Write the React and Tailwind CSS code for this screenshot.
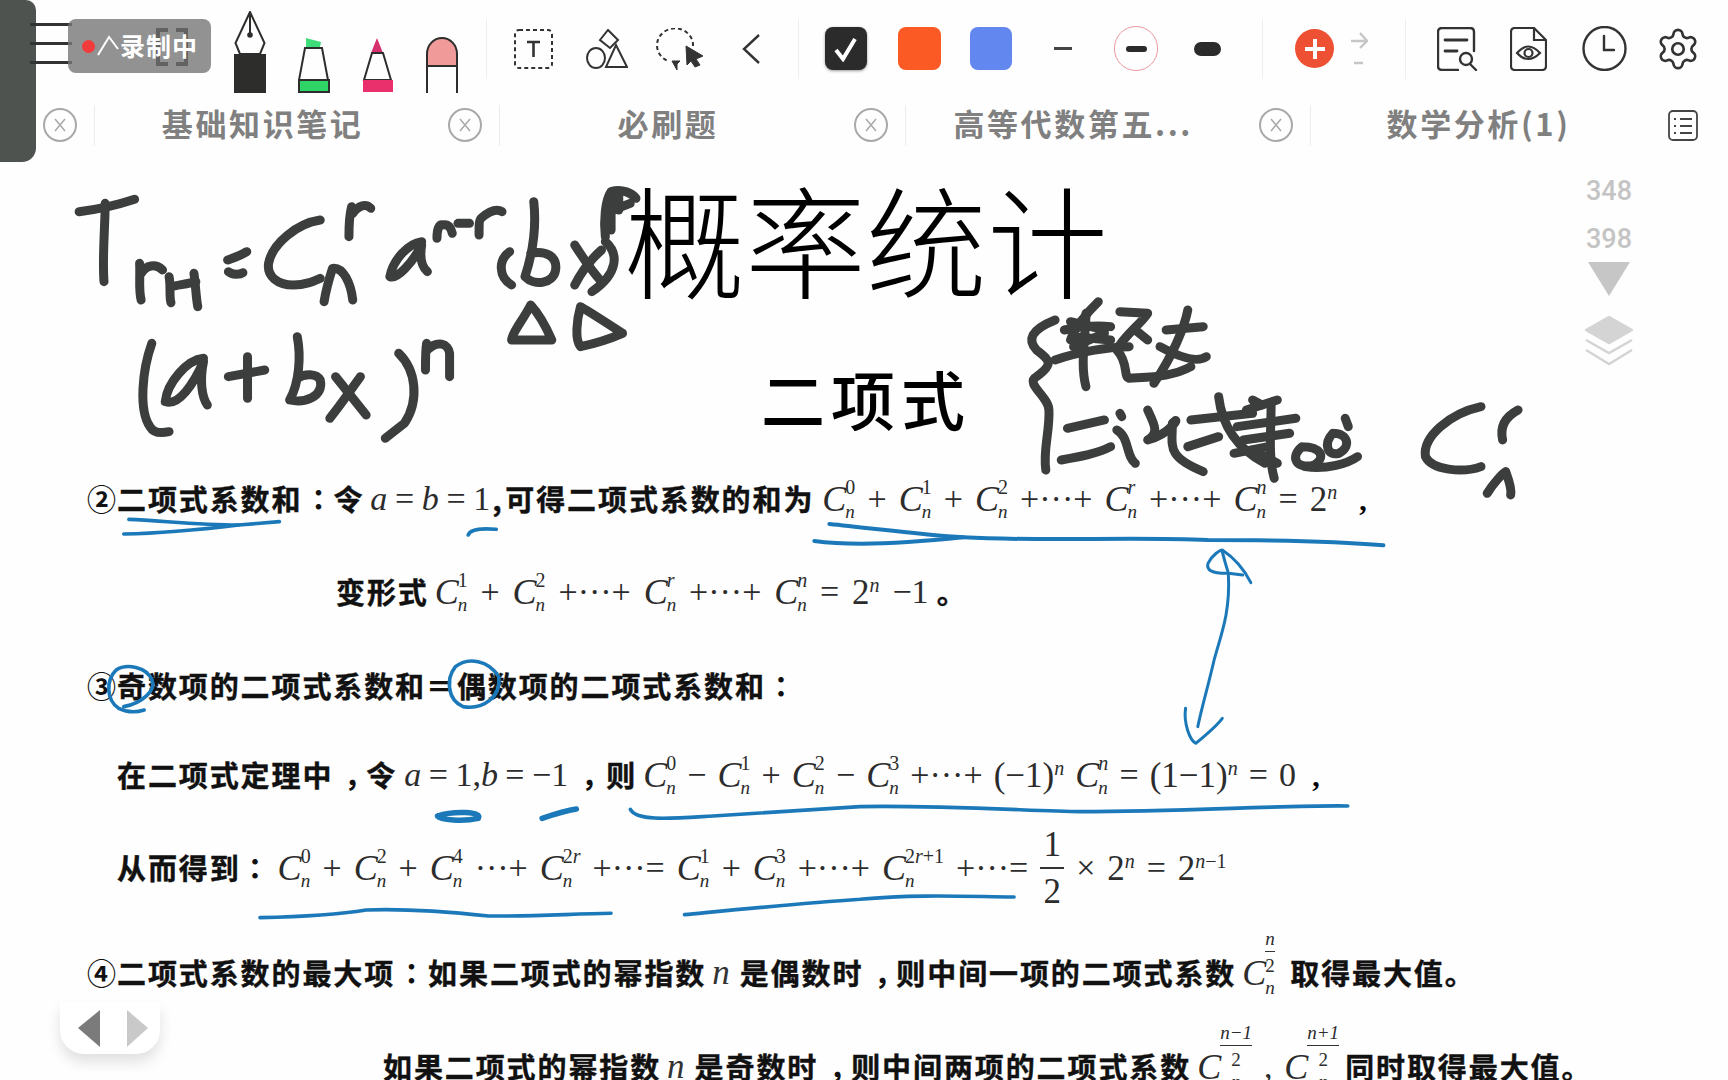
import React from 'react';
import { Settings } from 'lucide-react';

const cjk = "font-['Noto_Sans_CJK_SC','Noto_Sans',sans-serif]";
const cjkTc = "font-['Noto_Sans_CJK_TC','Noto_Sans',sans-serif]";
const serif = "font-['Liberation_Serif','Noto_Sans_CJK_SC',serif]";

// freehand pen marks, coords taken from crops so x/y scale differ
const Strokes = ({ tx, ty, sx, list, width, color }) => (
  <g transform={`translate(${tx} ${ty}) scale(${sx} 0.3333)`} fill="none" stroke={color} strokeWidth={width} strokeLinecap="round" strokeLinejoin="round">
    {list.map((d, i) => (
      <path key={i} d={d} vectorEffect="non-scaling-stroke" />
    ))}
  </g>
);

const formulaInk = [
  'M50 125C90 120 150 105 195 88', 'M118 100C118 170 110 260 115 335',
  'M208 280C210 320 205 360 212 390', 'M212 310C225 285 250 280 268 300',
  'M285 320C290 350 285 380 290 398', 'M290 350C310 345 340 340 355 335', 'M350 310C355 350 355 380 360 410',
  'M438 270C450 265 470 258 488 245', 'M440 305C450 315 470 315 478 308',
  'M680 150C620 160 555 220 545 280C540 320 570 345 610 345C640 345 660 335 680 325',
  'M762 110C755 140 755 170 755 200', 'M765 130C780 105 800 100 812 115',
  'M690 395C695 360 705 320 712 295C740 290 760 340 765 390',
  'M945 215C910 220 870 270 862 320C880 330 920 280 945 225C940 260 945 290 960 305',
  'M985 205C985 180 990 160 1000 165C1015 160 1022 175 1025 190', 'M1040 160L1070 160',
  'M1095 195C1095 170 1095 150 1100 145C1120 125 1140 115 1155 125',
  'M1175 245C1145 270 1145 320 1180 345',
  'M1238 95C1245 170 1235 250 1215 320C1240 350 1290 340 1295 300C1300 260 1270 240 1230 250',
  'M1345 225C1370 270 1395 310 1415 335', 'M1345 345C1365 300 1385 270 1415 240',
  'M1425 215C1460 250 1460 310 1390 365',
  'M1425 200C1420 150 1425 90 1440 65C1470 55 1495 70 1505 85', 'M1445 120L1490 100', 'M1440 80L1440 180', 'M1460 70L1460 120',
  'M1230 405C1210 450 1180 490 1180 510C1210 510 1250 510 1285 510C1270 470 1250 430 1230 405Z',
  'M1360 410C1350 450 1345 510 1360 530C1400 520 1450 500 1470 490C1430 460 1390 430 1360 410Z',
  'M240 520C215 600 205 720 235 770C245 790 265 790 285 785',
  'M375 565C330 570 280 640 275 695C310 710 350 640 375 575C365 630 370 680 385 705',
  'M440 620L535 600', 'M490 560L490 685',
  'M620 500C630 560 625 640 600 690C640 700 690 680 680 630C670 610 640 610 620 625',
  'M720 620L800 735', 'M785 620C760 660 730 710 705 745',
  'M885 550C930 600 940 690 900 760L850 805',
  'M955 600C955 570 955 540 958 520', 'M960 540C985 510 1015 520 1018 550L1018 620',
];

const noteInk = [
  'M640 450C600 480 595 510 610 540C630 570 640 580 610 620C590 640 630 680 630 720C632 780 620 840 625 900',
  'M710 395C690 430 670 480 665 510', 'M655 480C680 470 710 465 730 470', 'M690 430C690 500 680 580 690 650',
  'M640 570C680 545 730 530 760 530', 'M670 500L730 510', 'M670 530L720 490', 'M665 455L720 480',
  'M745 425L790 430C780 460 750 500 740 540C760 580 750 620 760 625C800 620 830 620 860 590',
  'M820 480L880 470', 'M855 420C850 470 830 560 800 640', 'M810 530C840 560 870 580 885 560', 'M770 480L790 510',
  'M660 775L720 750', 'M650 870C680 860 710 850 730 830',
  'M745 730L748 740', 'M740 780C760 800 755 860 770 880',
  'M790 720C800 760 810 790 790 810C830 790 845 730 830 760C830 830 820 860 880 905',
  'M860 750L960 730', 'M905 680C910 760 930 830 980 880', 'M960 690L975 705', 'M855 830L905 800',
  'M950 720L1000 690', 'M935 770L1030 745', 'M945 810L1020 790', 'M990 700C990 780 985 860 995 925', 'M930 850L985 830', 'M960 840L1000 880',
  'M1040 830C1020 860 1030 900 1060 885C1080 860 1070 830 1040 830',
  'M1090 790C1075 820 1080 860 1100 850C1120 830 1115 790 1090 790', 'M1045 890C1080 900 1115 880 1130 860', 'M1110 745L1115 770',
  'M1330 710C1280 730 1235 800 1240 860C1250 900 1300 910 1330 890',
  'M1365 810C1360 770 1370 740 1390 720',
  'M1340 970C1350 940 1365 910 1370 905C1375 930 1380 960 1378 975',
];

const Ink = () => (
  <svg className="absolute inset-0 pointer-events-none" width="1728" height="1080">
    <Strokes tx={60} ty={170} sx={0.3827} list={formulaInk} width={9} color="#3c3e3d" />
    <Strokes tx={660} ty={170} sx={0.6173} list={noteInk} width={9} color="#3c3e3d" />
    <Strokes tx={60} ty={460} sx={0.5102} width={3.6} color="#1c79b9" list={[
      'M135 178C200 182 270 195 350 195L430 185', 'M125 222C200 220 270 210 350 195',
      'M800 225C805 205 830 205 855 208',
      'M180 660C170 620 130 610 110 630C90 660 90 720 115 745C135 760 155 755 165 750', 'M125 740C160 730 190 690 180 660',
      'M860 650C840 600 800 590 775 620C755 660 760 720 790 740C830 750 865 710 860 650',
    ]} />
    <Strokes tx={800} ty={460} sx={0.408} width={4} color="#1c79b9" list={[
      'M72 192C180 205 300 225 400 232C600 245 800 230 1000 240C1200 240 1330 245 1430 256',
      'M35 243C150 262 300 245 400 232',
    ]} />
    <Strokes tx={800} ty={460} sx={0.408} width={3} color="#1c79b9" list={[
      'M1050 345C1055 460 1030 530 1015 600C1000 680 985 740 975 800',
      'M945 745C940 790 955 840 970 850C990 830 1020 800 1035 775',
      'M1045 340C1010 340 995 330 1000 310C1010 285 1030 270 1035 270C1060 290 1085 320 1105 368', 'M1035 275C1040 300 1045 320 1050 340L1085 345',
    ]} />
    <Strokes tx={60} ty={740} sx={0.5102} width={3.6} color="#1c79b9" list={[
      'M1118 208C1130 245 1200 235 1280 228L1568 200C1700 195 1900 212 2000 215C2200 215 2400 195 2524 198',
      'M392 533C480 530 540 525 600 510C680 505 760 515 840 528C920 530 1000 522 1080 520',
      'M1224 524C1320 510 1450 490 1568 478C1680 462 1780 470 1870 471',
    ]} />
    <Strokes tx={60} ty={740} sx={0.5102} width={5.5} color="#1c79b9" list={[
      'M740 228C770 212 830 214 820 235C790 245 745 240 740 228',
      'M945 235C970 222 990 212 1012 207',
    ]} />
  </svg>
);

const PenIcon = () => (
  <svg width="32" height="82" fill="none" stroke="#2d2d2b" strokeWidth="2">
    <path d="M16 1L1.5 32L6 43H26L30.5 32Z" />
    <path d="M16 1V24" />
    <circle cx="16" cy="24" r="1.8" fill="#2d2d2b" />
    <rect x="0" y="44" width="31" height="37" fill="#2d2d2b" />
  </svg>
);

const GreenMarker = () => (
  <svg width="32" height="55" fill="none" stroke="#2d2d2b" strokeWidth="2">
    <path d="M8 0L23 4L22 9H8Z" fill="#3fdc7a" stroke="none" />
    <path d="M7 10H24L30 42H1Z" />
    <rect x="1" y="42" width="30" height="12" fill="#2fd466" />
  </svg>
);

const PinkMarker = () => (
  <svg width="32" height="55" fill="none" stroke="#2d2d2b" strokeWidth="2">
    <path d="M15 0L9 15H21Z" fill="#d6306f" stroke="none" />
    <path d="M10 15H21L29 42H2Z" />
    <rect x="1" y="42" width="30" height="12" fill="#ea2f6d" stroke="none" />
  </svg>
);

const Eraser = () => (
  <svg width="32" height="56" fill="none" stroke="#2d2d2b" strokeWidth="2">
    <path d="M1 29V17A15 16 0 0 1 31 17V29Z" fill="#f09a9a" />
    <path d="M1 29V56M31 29V56" />
  </svg>
);

const TextTool = () => (
  <svg width="39" height="40" fill="none" stroke="#333">
    <rect x="1" y="1" width="37" height="38" rx="4" strokeWidth="2" strokeDasharray="4 3" />
    <path d="M13 13H26M19.5 13V28" strokeWidth="2.6" />
  </svg>
);

const ShapesTool = () => (
  <svg width="42" height="40" fill="none" stroke="#333" strokeWidth="2">
    <path d="M22 1L32 11L24 19L14 11Z" />
    <ellipse cx="10" cy="29" rx="9" ry="10" />
    <path d="M30 16L41 38H20Z" />
  </svg>
);

const LassoTool = () => (
  <svg width="48" height="42" fill="none" stroke="#333" strokeWidth="2">
    <path d="M37 18A18 17 0 1 0 12 33" strokeDasharray="4 3" />
    <path d="M30 18L47 28L40 31L44 37L39 39L35 33L31 37Z" fill="#333" strokeWidth="1" />
    <path d="M16 33H24L21 36V42Z" fill="#333" strokeWidth="1" />
  </svg>
);

const DocSearch = () => (
  <svg width="41" height="44" fill="none" stroke="#333" strokeWidth="2.4" strokeLinecap="round">
    <path d="M21 43H5Q1 43 1 39V5Q1 1 5 1H33Q37 1 37 5V24" />
    <path d="M8 13H30M8 24H20" strokeWidth="2.8" />
    <circle cx="29" cy="32" r="6" />
    <path d="M33 37L39 43" />
  </svg>
);

const DocEye = () => (
  <svg width="37" height="44" fill="none" stroke="#333" strokeWidth="2.2">
    <path d="M5 1H24L36 13V39Q36 43 32 43H5Q1 43 1 39V5Q1 1 5 1Z" />
    <path d="M24 1V13H36" />
    <path d="M7 26Q18 13 30 26Q18 38 7 26Z" />
    <circle cx="18.5" cy="26" r="4" />
  </svg>
);

const ClockIcon = () => (
  <svg width="45" height="45" fill="none" stroke="#333" strokeWidth="2.4" strokeLinecap="round">
    <ellipse cx="22.5" cy="22.5" rx="21" ry="21.5" />
    <path d="M22 10V24H32" />
  </svg>
);

const CloseDot = () => (
  <svg width="34" height="34" fill="none" stroke="#a9a9a9" className="shrink-0">
    <circle cx="17" cy="17" r="16" strokeWidth="2" />
    <path d="M12 11L22 23M22 11L12 23" strokeWidth="1.5" />
  </svg>
);

const ListIcon = () => (
  <svg width="30" height="31" fill="none" stroke="#444" strokeWidth="1.8">
    <rect x="1" y="1" width="28" height="29" rx="4" />
    <path d="M6 9H8M12 9H24M6 16H8M12 16H24M6 23H8M12 23H24" />
  </svg>
);

const Tab = ({ label }) => (
  <div className="w-[405.3px] h-[42px] flex items-center shrink-0">
    <CloseDot />
    <div className="ml-[17px] h-[41px] w-px bg-[#ececec]" />
    <div className={`flex-1 pr-[18px] -mt-[4px] text-center text-[31px] tracking-[2.6px] font-bold text-[#808080] whitespace-nowrap ${cjk}`}>{label}</div>
  </div>
);

const Sep = ({ className }) => <div className={`h-[60px] w-px bg-[#efefef] shrink-0 ${className}`} />;

const Toolbar = () => (
  <div className="flex items-center h-[100px] pb-[3px] pl-[234px]">
    <div className="flex items-end gap-[32px] self-end mb-[4px]">
      <PenIcon />
      <GreenMarker />
      <PinkMarker />
      <Eraser />
    </div>
    <Sep className="ml-[28px]" />
    <div className="ml-[27px]"><TextTool /></div>
    <div className="ml-[33px]"><ShapesTool /></div>
    <div className="ml-[28px]"><LassoTool /></div>
    <svg className="ml-[38px]" width="18" height="30" fill="none" stroke="#333" strokeWidth="2.4"><path d="M17 1L2 15L17 29" /></svg>
    <Sep className="ml-[38px]" />
    <div className="ml-[26px] w-[42px] h-[43px] rounded-lg bg-[#2b2b2b] flex items-center justify-center shadow-[0_1px_3px_#999]">
      <svg width="26" height="26" fill="none" stroke="#fff" strokeWidth="4"><path d="M3 14L10 23L22 3" /></svg>
    </div>
    <div className="ml-[31px] w-[43px] h-[43px] rounded-lg bg-[#fb5a24]" />
    <div className="ml-[29px] w-[42px] h-[43px] rounded-lg bg-[#6287ee]" />
    <div className="ml-[42px] w-[18px] h-[3px] bg-[#444]" />
    <div className="ml-[42px] w-[44px] h-[45px] rounded-full border border-[#e89aa0] flex items-center justify-center">
      <div className="w-[21px] h-[6px] rounded-full bg-[#2b2b2b]" />
    </div>
    <div className="ml-[36px] w-[27px] h-[14px] rounded-full bg-[#2b2b2b]" />
    <Sep className="ml-[41px]" />
    <div className="ml-[32px] w-[39px] h-[39px] rounded-full bg-[#ee5033] flex items-center justify-center">
      <svg width="22" height="22" fill="none" stroke="#fff" strokeWidth="4"><path d="M11 1V21M1 11H21" /></svg>
    </div>
    <svg className="ml-[16px]" width="18" height="34" fill="none" stroke="#c6c6c6" strokeWidth="2.4">
      <path d="M1 9H16M10 1L17 9L10 16M4 31H13" />
    </svg>
    <Sep className="ml-[37px]" />
    <div className="ml-[31px]"><DocSearch /></div>
    <div className="ml-[32px]"><DocEye /></div>
    <div className="ml-[35px]"><ClockIcon /></div>
    <Settings className="ml-[28px] text-[#333]" size={46} strokeWidth={1.4} />
  </div>
);

const Tabs = () => (
  <div className="flex items-center h-[48px] pl-[43px]">
    <Tab label="基础知识笔记" />
    <Tab label="必刷题" />
    <Tab label="高等代数第五..." />
    <Tab label="数学分析(1)" />
    <div className="ml-[4px]"><ListIcon /></div>
  </div>
);

// formula pieces
const I = ({ children }) => <i>{children}</i>;

const C = ({ sup, sub = 'n', className = '' }) => (
  <span className={`inline-flex items-center leading-none ${className}`}>
    <i className="text-[36px]">C</i>
    <span className="flex flex-col items-start justify-between h-[44px] -ml-[1px] text-[20px] leading-none">
      <span>{sup}</span>
      <i className="text-[19px]">{sub}</i>
    </span>
  </span>
);

// C with a fraction as its upper index, taller than the text row
const CFrac = ({ top }) => (
  <span className="inline-flex items-center h-[38px] leading-none">
    <i className="text-[36px]">C</i>
    <span className="flex flex-col items-center justify-between h-[68px] mb-[20px] -ml-[1px] text-[19px] leading-none">
      <i>{top}</i>
      <span className="w-full h-px bg-[#333]" />
      <span>2</span>
      <i>n</i>
    </span>
  </span>
);

const Power = ({ base, sup }) => (
  <span className="inline-flex items-start leading-none">
    <span className="text-[35px]">{base}</span>
    <span className="text-[20px] leading-none">{sup}</span>
  </span>
);

const Sym = ({ children }) => <span className="text-[34px] leading-none">{children}</span>;

const Formula = ({ w, children, className = '' }) => (
  <div className={`flex items-center justify-between shrink-0 text-[#2c2c2c] ${serif} ${w} ${className}`}>{children}</div>
);

const H = ({ children, className = '' }) => (
  <span className={`text-[29px] tracking-[1.9px] font-bold text-[#111] [-webkit-text-stroke:0.4px_#111] whitespace-nowrap shrink-0 ${cjk} ${className}`}>{children}</span>
);

// full-width colon sits centred in the source, the TC cut does that
const Colon = ({ className = '' }) => (
  <span className={`text-[29px] font-bold text-[#111] text-center shrink-0 ${cjkTc} ${className}`}>：</span>
);

// comma stays on the baseline but in the middle of its cell
const Comma = ({ className = '' }) => (
  <span className={`text-[29px] tracking-[-10px] font-bold text-[#111] shrink-0 pl-[11px] ${cjk} ${className}`}>，</span>
);

const Row = ({ className = '', children }) => (
  <div className={`flex items-center h-[38px] whitespace-nowrap ${className}`}>{children}</div>
);

const Circled = ({ children }) => (
  <span className={`w-[30px] text-[29px] font-bold text-[#111] shrink-0 ${cjk}`}>{children}</span>
);

const Doc = () => (
  <div className="flex flex-col">
    <div className="h-[160px] flex items-center pl-[624px]">
      <span className={`-mt-[8px] text-[121px] font-light leading-none text-black whitespace-nowrap ${cjk}`}>概率统计</span>
    </div>
    <div className="h-[160px] flex items-center pl-[761px]">
      <span className={`-mt-[6px] text-[64px] tracking-[6px] font-medium leading-none text-black whitespace-nowrap ${cjk}`}>二项式</span>
    </div>

    <Row className="pl-[87px]">
      <Circled>②</Circled>
      <H>二项式系数和</H>
      <Colon className="ml-[1px] w-[30px]" />
      <H>令</H>
      <Formula w="w-[120px]" className="ml-[6px]">
        <Sym><I>a</I></Sym><Sym>=</Sym><Sym><I>b</I></Sym><Sym>=</Sym><Sym>1</Sym>
      </Formula>
      <H className="ml-[2px] w-[13px]">,</H>
      <H>可得二项式系数的和为</H>
      <Formula w="w-[515px]" className="ml-[8px]">
        <C sup="0" /><Sym>+</Sym><C sup="1" /><Sym>+</Sym><C sup="2" /><Sym>+···+</Sym><C sup={<i>r</i>} /><Sym>+···+</Sym><C sup={<i>n</i>} /><Sym>=</Sym><Power base="2" sup={<i>n</i>} />
      </Formula>
      <span className={`ml-[22px] text-[30px] font-bold ${serif}`}>,</span>
    </Row>

    <Row className="pl-[336px] mt-[55px]">
      <H>变形式</H>
      <Formula w="w-[494px]" className="ml-[6px]">
        <C sup="1" /><Sym>+</Sym><C sup="2" /><Sym>+···+</Sym><C sup={<i>r</i>} /><Sym>+···+</Sym><C sup={<i>n</i>} /><Sym>=</Sym><Power base="2" sup={<i>n</i>} /><Sym>−1</Sym>
      </Formula>
      <H className="ml-[8px]">。</H>
    </Row>

    <Row className="pl-[87px] mt-[56px]">
      <Circled>③</Circled>
      <H>奇数项的二项式系数和＝偶数项的二项式系数和</H>
      <Colon className="w-[30px]" />
    </Row>

    <Row className="pl-[117px] mt-[51px]">
      <H>在二项式定理中</H>
      <Comma className="w-[33px]" />
      <H>令</H>
      <Formula w="w-[164px]" className="ml-[7px]">
        <Sym><I>a</I></Sym><Sym>=</Sym><Sym>1,<I>b</I></Sym><Sym>=</Sym><Sym>−1</Sym>
      </Formula>
      <Comma className="ml-[2px] w-[36px]" />
      <H>则</H>
      <Formula w="w-[653px]" className="ml-[6px]">
        <C sup="0" /><Sym>−</Sym><C sup="1" /><Sym>+</Sym><C sup="2" /><Sym>−</Sym><C sup="3" /><Sym>+···+</Sym>
        <Power base="(−1)" sup={<i>n</i>} /><C sup={<i>n</i>} /><Sym>=</Sym><Power base="(1−1)" sup={<i>n</i>} /><Sym>=</Sym><Sym>0</Sym>
      </Formula>
      <span className={`ml-[16px] text-[30px] font-bold ${serif}`}>,</span>
    </Row>

    <Row className="pl-[117px] mt-[55px]">
      <H>从而得到</H>
      <Colon className="w-[29px]" />
      <Formula w="w-[949px]" className="ml-[8px]">
        <C sup="0" /><Sym>+</Sym><C sup="2" /><Sym>+</Sym><C sup="4" /><Sym>···+</Sym><C sup={<>2<i>r</i></>} /><Sym>+···=</Sym>
        <C sup="1" /><Sym>+</Sym><C sup="3" /><Sym>+···+</Sym><C sup={<>2<i>r</i>+1</>} /><Sym>+···=</Sym>
        <span className="flex flex-col items-center text-[35px] leading-none">
          <span>1</span>
          <span className="w-[24px] h-[2px] bg-[#333] my-[5px]" />
          <span>2</span>
        </span>
        <Sym>×</Sym><Power base="2" sup={<i>n</i>} /><Sym>=</Sym><Power base="2" sup={<><i>n</i>−1</>} />
      </Formula>
    </Row>

    <Row className="pl-[87px] mt-[67px]">
      <Circled>④</Circled>
      <H>二项式系数的最大项</H>
      <Colon className="w-[33px]" />
      <H>如果二项式的幂指数</H>
      <i className={`ml-[6px] text-[35px] text-[#333] ${serif}`}>n</i>
      <H className="ml-[10px]">是偶数时</H>
      <Comma className="w-[33px]" />
      <H>则中间一项的二项式系数</H>
      <Formula w="w-[48px]" className="ml-[6px]">
        <CFrac top="n" />
      </Formula>
      <H>取得最大值。</H>
    </Row>

    <Row className="pl-[383px] mt-[56px]">
      <H>如果二项式的幂指数</H>
      <i className={`ml-[6px] text-[35px] text-[#333] ${serif}`}>n</i>
      <H className="ml-[10px]">是奇数时</H>
      <Comma className="w-[33px]" />
      <H>则中间两项的二项式系数</H>
      <Formula w="w-[142px]" className="ml-[6px]">
        <CFrac top="n−1" />
        <Sym>,</Sym>
        <CFrac top="n+1" />
      </Formula>
      <H className="ml-[6px]">同时取得最大值。</H>
    </Row>
  </div>
);

const PageRail = () => (
  <div className="absolute left-[1585px] top-[176px] w-[48px] flex flex-col items-center text-[#c4c4c4]">
    <span className="font-['Roboto',sans-serif] text-[27px] leading-[30px] font-medium">348</span>
    <span className="mt-[18px] font-['Roboto',sans-serif] text-[27px] leading-[30px] font-medium">398</span>
    <svg className="mt-[8px]" width="46" height="36" fill="#c6c6c6"><path d="M2 0H44L23 34Z" /></svg>
    <svg className="mt-[18px]" width="48" height="50" fill="none" stroke="#d4d4d4" strokeWidth="2.4">
      <path d="M24 1L47 14L24 27L1 14Z" fill="#d4d4d4" />
      <path d="M1 24L24 37L47 24M1 34L24 48L47 34" />
    </svg>
  </div>
);

const RecordingBadge = () => (
  <>
    <div className="absolute left-0 top-0 w-[36px] h-[162px] bg-[#4f5350] rounded-br-[14px] rounded-tr-[10px]" />
    <div className="absolute left-[30px] top-[23px] w-[42px] flex flex-col gap-[16px]">
      <div className="h-[3px] bg-[#333]" />
      <div className="h-[3px] bg-[#333]" />
      <div className="h-[3px] bg-[#333]" />
    </div>
    <svg className="absolute left-[154px] top-[28px]" width="36" height="38" fill="none" stroke="#111" strokeWidth="4">
      <path d="M14 2H4V36H14M22 2H32V36H22" />
    </svg>
    <div className={`absolute left-[68px] top-[19px] w-[143px] h-[54px] rounded-lg bg-[#777]/80 flex items-center text-white ${cjk}`}>
      <span className="ml-[14px] w-[13px] h-[13px] rounded-full bg-[#f23b3b]" />
      <svg className="ml-[1px]" width="24" height="26" fill="none" stroke="#fff" strokeWidth="2"><path d="M2 22L13 4L22 16" /></svg>
      <span className="text-[25px] tracking-[1px] font-bold">录制中</span>
    </div>
  </>
);

const PageArrows = () => (
  <div className="absolute left-[60px] top-[1002px] w-[100px] h-[52px] bg-white rounded-b-[24px] shadow-[0_8px_14px_rgba(0,0,0,0.12)] flex items-center justify-center gap-[27px] pl-[6px]">
    <svg width="22" height="37" fill="#7b7b7b"><path d="M22 0V37L0 18Z" /></svg>
    <svg width="21" height="37" fill="#c9c9c9"><path d="M0 0V37L21 18Z" /></svg>
  </div>
);

export default function App() {
  return (
    <div className="relative w-[1728px] h-[1080px] overflow-hidden bg-[#fefefe]">
      <Toolbar />
      <div className="mt-[1px]"><Tabs /></div>
      <div className="mt-[11px]"><Doc /></div>
      <PageRail />
      <Ink />
      <RecordingBadge />
      <PageArrows />
    </div>
  );
}
